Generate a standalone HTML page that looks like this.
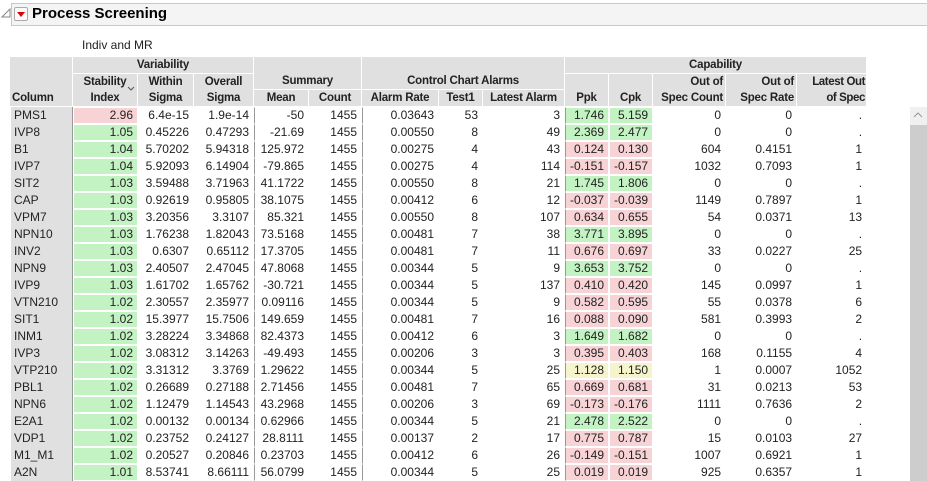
<!DOCTYPE html>
<html><head><meta charset="utf-8"><style>
*{margin:0;padding:0;box-sizing:border-box}
body{width:927px;height:481px;overflow:hidden;background:#fff;font-family:"Liberation Sans",Arial,sans-serif;color:#222;position:relative}
.bar{position:absolute;left:11px;top:3px;width:920px;height:23px;background:#f4f4f4;border:1px solid #c8c8c8}
.title{position:absolute;left:32px;top:5px;font-size:15px;font-weight:bold;color:#000}
.btn{position:absolute;left:14px;top:7px;width:14px;height:14px;border:1px solid #aaa;border-radius:2px;background:#fafafa}
.sub{position:absolute;left:82px;top:38px;font-size:12px}
table{position:absolute;left:10px;top:57px;border-collapse:separate;border-spacing:0;table-layout:fixed;font-size:12px}
th{background:#e0e0e0;font-weight:bold;color:#222;border-right:1px solid #fff;border-bottom:1px solid #fff;vertical-align:bottom;line-height:16px;font-size:11.5px;padding:0 2px;white-space:nowrap;letter-spacing:-0.2px}
th.c{text-align:center}
th.r{text-align:right}
td{height:17px;line-height:15px;text-align:right;padding:0 4px;border:1px solid #fff;white-space:nowrap}
td.n{background:#e0e0e0;text-align:left;border-right:1px solid #999;border-top:none;border-bottom:none;padding-left:3px}
.g{background:#c3f2c3}.p{background:#f8d3d6}.y{background:#f5f4cc}
.s{border-left:1px solid #999}
.sb{position:absolute;left:910px;top:107px;width:17px;height:374px;background:#f0f0f0}
.th{position:absolute;left:910px;top:125px;width:17px;height:356px;background:#cdcdcd}
</style></head><body>
<svg style="position:absolute;left:1px;top:8px" width="10" height="10"><path d="M1 9 L9 9 L9 1 Z" fill="none" stroke="#888"/></svg>
<div class="bar"></div>
<div class="btn"><svg width="12" height="12" style="position:absolute;left:0;top:0"><path d="M2 4 L10 4 L6 9 Z" fill="#d00"/></svg></div>
<div class="title">Process Screening</div>
<div class="sub">Indiv and MR</div>
<table>
<colgroup><col style="width:63px"><col style="width:65px"><col style="width:56px"><col style="width:60px"><col style="width:55px"><col style="width:53px"><col style="width:77px"><col style="width:44px"><col style="width:82px"><col style="width:44px"><col style="width:44px"><col style="width:73px"><col style="width:71px"><col style="width:70px"></colgroup>
<tr style="height:17px"><th rowspan="3" style="text-align:left">Column</th><th colspan="3" class="c">Variability</th><th colspan="2" rowspan="2" class="c" style="vertical-align:middle;padding-top:16px">Summary</th><th colspan="3" rowspan="2" class="c" style="vertical-align:middle;padding-top:16px">Control Chart Alarms</th><th colspan="5" class="c">Capability</th></tr>
<tr style="height:16px"><th rowspan="2" class="c" style="position:relative">Stability<br>Index<svg style="position:absolute;right:2px;top:12px" width="8" height="6"><path d="M1 1 L4 4 L7 1" fill="none" stroke="#555"/></svg></th><th rowspan="2" class="c">Within<br>Sigma</th><th rowspan="2" class="c">Overall<br>Sigma</th><th rowspan="2" class="c">Ppk</th><th rowspan="2" class="c">Cpk</th><th rowspan="2" class="r">Out of<br>Spec Count</th><th rowspan="2" class="r">Out of<br>Spec Rate</th><th rowspan="2" class="r" style="padding:0 1px;letter-spacing:-0.4px">Latest Out<br>of Spec</th></tr>
<tr style="height:17px"><th class="c">Mean</th><th class="c">Count</th><th class="c">Alarm Rate</th><th class="c">Test1</th><th class="c">Latest Alarm</th></tr>
<tr><td class="n">PMS1</td><td class="p">2.96</td><td>6.4e-15</td><td>1.9e-14</td><td class="s">-50</td><td>1455</td><td class="s">0.03643</td><td>53</td><td>3</td><td class="g s">1.746</td><td class="g">5.159</td><td>0</td><td>0</td><td>.</td></tr>
<tr><td class="n">IVP8</td><td class="g">1.05</td><td>0.45226</td><td>0.47293</td><td class="s">-21.69</td><td>1455</td><td class="s">0.00550</td><td>8</td><td>49</td><td class="g s">2.369</td><td class="g">2.477</td><td>0</td><td>0</td><td>.</td></tr>
<tr><td class="n">B1</td><td class="g">1.04</td><td>5.70202</td><td>5.94318</td><td class="s">125.972</td><td>1455</td><td class="s">0.00275</td><td>4</td><td>43</td><td class="p s">0.124</td><td class="p">0.130</td><td>604</td><td>0.4151</td><td>1</td></tr>
<tr><td class="n">IVP7</td><td class="g">1.04</td><td>5.92093</td><td>6.14904</td><td class="s">-79.865</td><td>1455</td><td class="s">0.00275</td><td>4</td><td>114</td><td class="p s">-0.151</td><td class="p">-0.157</td><td>1032</td><td>0.7093</td><td>1</td></tr>
<tr><td class="n">SIT2</td><td class="g">1.03</td><td>3.59488</td><td>3.71963</td><td class="s">41.1722</td><td>1455</td><td class="s">0.00550</td><td>8</td><td>21</td><td class="g s">1.745</td><td class="g">1.806</td><td>0</td><td>0</td><td>.</td></tr>
<tr><td class="n">CAP</td><td class="g">1.03</td><td>0.92619</td><td>0.95805</td><td class="s">38.1075</td><td>1455</td><td class="s">0.00412</td><td>6</td><td>12</td><td class="p s">-0.037</td><td class="p">-0.039</td><td>1149</td><td>0.7897</td><td>1</td></tr>
<tr><td class="n">VPM7</td><td class="g">1.03</td><td>3.20356</td><td>3.3107</td><td class="s">85.321</td><td>1455</td><td class="s">0.00550</td><td>8</td><td>107</td><td class="p s">0.634</td><td class="p">0.655</td><td>54</td><td>0.0371</td><td>13</td></tr>
<tr><td class="n">NPN10</td><td class="g">1.03</td><td>1.76238</td><td>1.82043</td><td class="s">73.5168</td><td>1455</td><td class="s">0.00481</td><td>7</td><td>38</td><td class="g s">3.771</td><td class="g">3.895</td><td>0</td><td>0</td><td>.</td></tr>
<tr><td class="n">INV2</td><td class="g">1.03</td><td>0.6307</td><td>0.65112</td><td class="s">17.3705</td><td>1455</td><td class="s">0.00481</td><td>7</td><td>11</td><td class="p s">0.676</td><td class="p">0.697</td><td>33</td><td>0.0227</td><td>25</td></tr>
<tr><td class="n">NPN9</td><td class="g">1.03</td><td>2.40507</td><td>2.47045</td><td class="s">47.8068</td><td>1455</td><td class="s">0.00344</td><td>5</td><td>9</td><td class="g s">3.653</td><td class="g">3.752</td><td>0</td><td>0</td><td>.</td></tr>
<tr><td class="n">IVP9</td><td class="g">1.03</td><td>1.61702</td><td>1.65762</td><td class="s">-30.721</td><td>1455</td><td class="s">0.00344</td><td>5</td><td>137</td><td class="p s">0.410</td><td class="p">0.420</td><td>145</td><td>0.0997</td><td>1</td></tr>
<tr><td class="n">VTN210</td><td class="g">1.02</td><td>2.30557</td><td>2.35977</td><td class="s">0.09116</td><td>1455</td><td class="s">0.00344</td><td>5</td><td>9</td><td class="p s">0.582</td><td class="p">0.595</td><td>55</td><td>0.0378</td><td>6</td></tr>
<tr><td class="n">SIT1</td><td class="g">1.02</td><td>15.3977</td><td>15.7506</td><td class="s">149.659</td><td>1455</td><td class="s">0.00481</td><td>7</td><td>16</td><td class="p s">0.088</td><td class="p">0.090</td><td>581</td><td>0.3993</td><td>2</td></tr>
<tr><td class="n">INM1</td><td class="g">1.02</td><td>3.28224</td><td>3.34868</td><td class="s">82.4373</td><td>1455</td><td class="s">0.00412</td><td>6</td><td>3</td><td class="g s">1.649</td><td class="g">1.682</td><td>0</td><td>0</td><td>.</td></tr>
<tr><td class="n">IVP3</td><td class="g">1.02</td><td>3.08312</td><td>3.14263</td><td class="s">-49.493</td><td>1455</td><td class="s">0.00206</td><td>3</td><td>3</td><td class="p s">0.395</td><td class="p">0.403</td><td>168</td><td>0.1155</td><td>4</td></tr>
<tr><td class="n">VTP210</td><td class="g">1.02</td><td>3.31312</td><td>3.3769</td><td class="s">1.29622</td><td>1455</td><td class="s">0.00344</td><td>5</td><td>25</td><td class="y s">1.128</td><td class="y">1.150</td><td>1</td><td>0.0007</td><td>1052</td></tr>
<tr><td class="n">PBL1</td><td class="g">1.02</td><td>0.26689</td><td>0.27188</td><td class="s">2.71456</td><td>1455</td><td class="s">0.00481</td><td>7</td><td>65</td><td class="p s">0.669</td><td class="p">0.681</td><td>31</td><td>0.0213</td><td>53</td></tr>
<tr><td class="n">NPN6</td><td class="g">1.02</td><td>1.12479</td><td>1.14543</td><td class="s">43.2968</td><td>1455</td><td class="s">0.00206</td><td>3</td><td>69</td><td class="p s">-0.173</td><td class="p">-0.176</td><td>1111</td><td>0.7636</td><td>2</td></tr>
<tr><td class="n">E2A1</td><td class="g">1.02</td><td>0.00132</td><td>0.00134</td><td class="s">0.62966</td><td>1455</td><td class="s">0.00344</td><td>5</td><td>21</td><td class="g s">2.478</td><td class="g">2.522</td><td>0</td><td>0</td><td>.</td></tr>
<tr><td class="n">VDP1</td><td class="g">1.02</td><td>0.23752</td><td>0.24127</td><td class="s">28.8111</td><td>1455</td><td class="s">0.00137</td><td>2</td><td>17</td><td class="p s">0.775</td><td class="p">0.787</td><td>15</td><td>0.0103</td><td>27</td></tr>
<tr><td class="n">M1_M1</td><td class="g">1.02</td><td>0.20527</td><td>0.20846</td><td class="s">0.23703</td><td>1455</td><td class="s">0.00412</td><td>6</td><td>26</td><td class="p s">-0.149</td><td class="p">-0.151</td><td>1007</td><td>0.6921</td><td>1</td></tr>
<tr><td class="n">A2N</td><td class="g">1.01</td><td>8.53741</td><td>8.66111</td><td class="s">56.0799</td><td>1455</td><td class="s">0.00344</td><td>5</td><td>25</td><td class="p s">0.019</td><td class="p">0.019</td><td>925</td><td>0.6357</td><td>1</td></tr>
</table>
<div class="sb"></div><div class="th"></div>
<svg style="position:absolute;left:913px;top:112px" width="10" height="6"><path d="M1 5 L5 1 L9 5" fill="none" stroke="#999"/></svg>
</body></html>
